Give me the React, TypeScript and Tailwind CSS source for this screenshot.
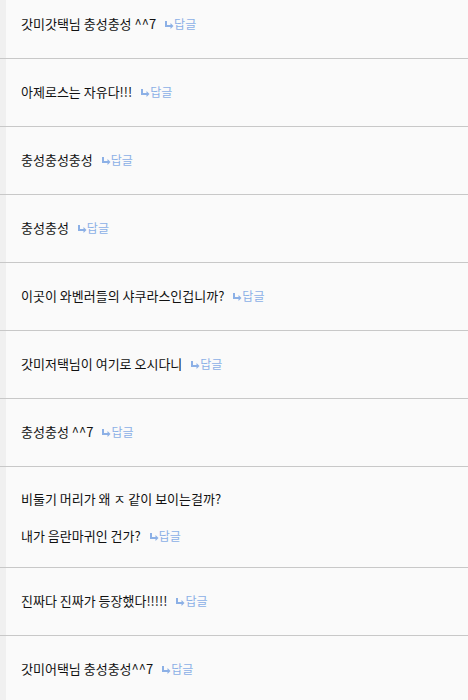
const comments: { lines: string[] }[] = [
  { lines: ["갓미갓택님 충성충성 ^^7"] },
  { lines: ["아제로스는 자유다!!!"] },
  { lines: ["충성충성충성"] },
  { lines: ["충성충성"] },
  { lines: ["이곳이 와벤러들의 샤쿠라스인겁니까?"] },
  { lines: ["갓미저택님이 여기로 오시다니"] },
  { lines: ["충성충성 ^^7"] },
  { lines: ["비둘기 머리가 왜 ㅈ 같이 보이는걸까?", "내가 음란마귀인 건가?"] },
  { lines: ["진짜다 진짜가 등장했다!!!!!"] },
  { lines: ["갓미어택님 충성충성^^7"] },
];

function ReplyLink() {
  return (
    <span className="ml-[9px] inline-flex items-center text-[12px] text-[#8cb0e6]">
      <svg width="9" height="8" viewBox="0 0 9 8" className="mt-[2px]">
        <path d="M1 0 V5 H6" fill="none" stroke="#8cb0e6" strokeWidth="2" />
        <path d="M5.5 2 L8.5 5 L5.5 8 Z" fill="#8cb0e6" />
      </svg>
      답글
    </span>
  );
}

export default function App() {
  return (
    <div
      className="h-[700px] overflow-hidden bg-[#fafafa] text-[13px] text-[#111]"
      style={{ fontFamily: '"Noto Sans CJK KR", "Noto Sans", sans-serif' }}
    >
      {comments.map((c, i) => (
        <div key={i} className="flex border-b border-[#c8c8c8]">
          <div className="w-[6px] shrink-0 bg-[#f0f0f0]" />
          <div
            className={`flex flex-col gap-[19px] pl-[15px] ${c.lines.length > 1 ? "pb-[22px]" : "pb-[25px]"} ${i === 0 ? "pt-[15px]" : c.lines.length > 1 ? "pt-[23px]" : "pt-[24px]"}`}
          >
            {c.lines.map((line, j) => (
              <div key={j} className="flex h-[18px] items-center leading-[18px]">
                <span>{line}</span>
                {j === c.lines.length - 1 && <ReplyLink />}
              </div>
            ))}
          </div>
        </div>
      ))}
    </div>
  );
}
